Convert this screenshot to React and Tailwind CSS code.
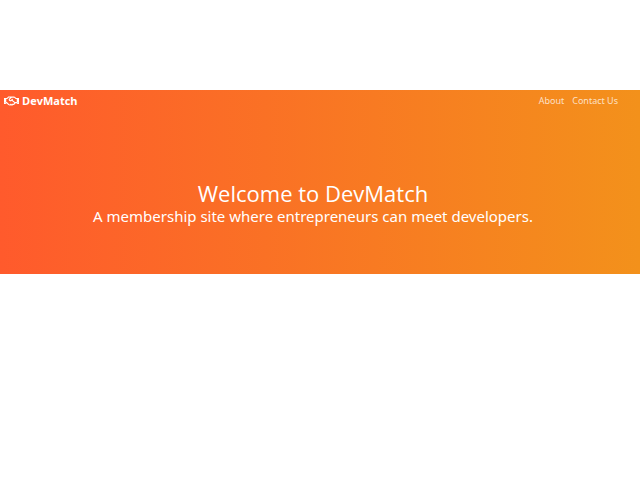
import { FaRegHandshake } from "react-icons/fa";

export default function App() {
  return (
    <div className="min-h-screen bg-white pt-[90px] font-['Open_Sans',sans-serif]">
      <header className="bg-linear-to-r/srgb from-[#ff5a2c] to-[#f3911b] text-white">
        <nav className="flex h-[22px] items-center justify-between pr-[22px] pl-1">
          <a href="#home" className="flex items-center gap-[3px] text-[11px] leading-[14px] font-bold">
            <FaRegHandshake className="h-3 w-[15px]" aria-hidden="true" />
            DevMatch
          </a>
          <ul className="flex gap-2 font-['Noto_Sans',sans-serif] text-[9px] leading-[14px] text-white/75">
            <li><a href="#about">About</a></li>
            <li><a href="#contact">Contact Us</a></li>
          </ul>
        </nav>
        <div className="pt-[68px] pr-[14px] pb-[48px] text-center">
          <h1 className="text-[22px] leading-[26px]">Welcome to DevMatch</h1>
          <p className="font-['Noto_Sans',sans-serif] text-[15px] leading-5">
            A membership site where entrepreneurs can meet developers.
          </p>
        </div>
      </header>
    </div>
  );
}
